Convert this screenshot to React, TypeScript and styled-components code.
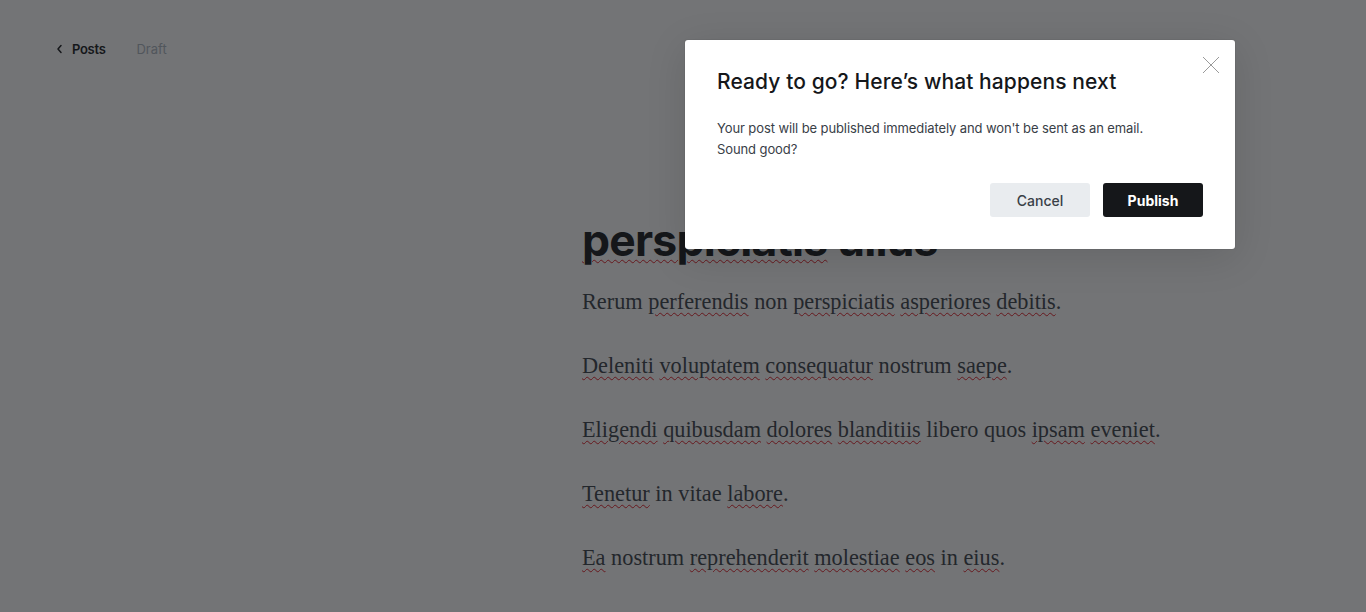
import React from "react";
import styled, { createGlobalStyle } from "styled-components";

const Global = createGlobalStyle`
  html, body { margin: 0; padding: 0; background: #ffffff; }
  body { font-family: Inter, "Liberation Sans", sans-serif; overflow: hidden; }
`;

const Page = styled.div`
  width: 1366px;
  height: 612px;
  position: relative;
  overflow: hidden;
  background: #fff;
`;

const TopBar = styled.header`
  display: flex;
  align-items: center;
  gap: 31px;
  height: 20px;
  padding: 39px 0 0 56px;
  font-size: 13px;
`;

const BackLink = styled.a`
  display: flex;
  align-items: center;
  gap: 8px;
  color: #15171a;
  font-weight: 600;
  letter-spacing: -0.3px;
  text-decoration: none;
`;

const Status = styled.span`
  color: #abb4be;
  font-weight: 400;
`;

const Editor = styled.main`
  padding: 152px 0 0 582px;
  width: 720px;
`;

const Title = styled.h1`
  margin: 0 0 17px;
  font-family: Inter, "Liberation Sans", sans-serif;
  font-size: 44.5px;
  line-height: 58px;
  font-weight: 700;
  letter-spacing: -0.8px;
  color: #15171a;
`;

const Para = styled.p`
  margin: 0 0 32px;
  font-family: "Liberation Serif", serif;
  font-size: 22.3px;
  line-height: 32px;
  color: #394047;
`;

const Typo = styled.span`
  text-decoration: underline wavy #e01b24;
  text-decoration-thickness: 1px;
  text-underline-offset: 3px;
`;

const Overlay = styled.div`
  position: absolute;
  inset: 0;
  background: rgba(21, 23, 26, 0.6);
`;

const Modal = styled.div`
  position: absolute;
  left: 685px;
  top: 40px;
  width: 550px;
  box-sizing: border-box;
  padding: 30px 32px 32px;
  background: #fff;
  border-radius: 3px;
  box-shadow: 0 0 0 1px rgba(0, 0, 0, 0.04), 0 8px 40px rgba(0, 0, 0, 0.12);
`;

const ModalTitle = styled.h2`
  margin: 0;
  font-size: 21px;
  line-height: 24px;
  font-weight: 500;
  color: #15171a;
  letter-spacing: 0.1px;
`;

const ModalText = styled.p`
  margin: 24px 0 0;
  font-size: 13px;
  line-height: 21px;
  color: #394047;
  letter-spacing: -0.1px;
`;

const Actions = styled.div`
  display: flex;
  justify-content: flex-end;
  gap: 13px;
  margin-top: 23px;
`;

const Button = styled.button<{ $primary?: boolean }>`
  width: 100px;
  height: 34px;
  border: 0;
  border-radius: 3px;
  font-family: Inter, "Liberation Sans", sans-serif;
  font-size: 14px;
  font-weight: ${(p) => (p.$primary ? 700 : 500)};
  color: ${(p) => (p.$primary ? "#ffffff" : "#394047")};
  background: ${(p) => (p.$primary ? "#15171a" : "#e9ecef")};
  cursor: pointer;
`;

const Close = styled.button`
  position: absolute;
  top: 15px;
  right: 14px;
  width: 20px;
  height: 20px;
  padding: 0;
  border: 0;
  background: none;
  display: flex;
  align-items: center;
  justify-content: center;
`;

type Part = string | { t: string };

const P = ({ parts }: { parts: Part[] }) => (
  <Para>
    {parts.map((p, i) =>
      typeof p === "string" ? <React.Fragment key={i}>{p}</React.Fragment> : <Typo key={i}>{p.t}</Typo>
    )}
  </Para>
);

const w = (t: string) => ({ t });

export default function App() {
  return (
    <Page>
      <Global />
      <TopBar>
        <BackLink href="#">
          <svg width="8" height="10" viewBox="0 0 8 10" fill="none">
            <path d="M5 1.5L2 5l3 3.5" stroke="#15171a" strokeWidth="1.5" strokeLinecap="round" strokeLinejoin="round" />
          </svg>
          Posts
        </BackLink>
        <Status>Draft</Status>
      </TopBar>
      <Editor>
        <Title>
          <Typo>perspiciatis</Typo> ullus
        </Title>
        <P parts={["Rerum ", w("perferendis"), " non ", w("perspiciatis"), " ", w("asperiores"), " ", w("debitis"), "."]} />
        <P parts={[w("Deleniti"), " ", w("voluptatem"), " ", w("consequatur"), " nostrum ", w("saepe"), "."]} />
        <P parts={[w("Eligendi"), " ", w("quibusdam"), " ", w("dolores"), " ", w("blanditiis"), " libero quos ", w("ipsam"), " ", w("eveniet"), "."]} />
        <P parts={[w("Tenetur"), " in vitae ", w("labore"), "."]} />
        <P parts={[w("Ea"), " nostrum ", w("reprehenderit"), " ", w("molestiae"), " ", w("eos"), " in ", w("eius"), "."]} />
      </Editor>
      <Overlay />
      <Modal>
        <Close aria-label="Close">
          <svg width="18" height="18" viewBox="0 0 18 18">
            <path d="M1 1l16 16M17 1L1 17" stroke="#9a9a9a" strokeWidth="1" />
          </svg>
        </Close>
        <ModalTitle>Ready to go? Here’s what happens next</ModalTitle>
        <ModalText>
          Your post will be published immediately and won't be sent as an email.
          <br />
          Sound good?
        </ModalText>
        <Actions>
          <Button>Cancel</Button>
          <Button $primary>Publish</Button>
        </Actions>
      </Modal>
    </Page>
  );
}
